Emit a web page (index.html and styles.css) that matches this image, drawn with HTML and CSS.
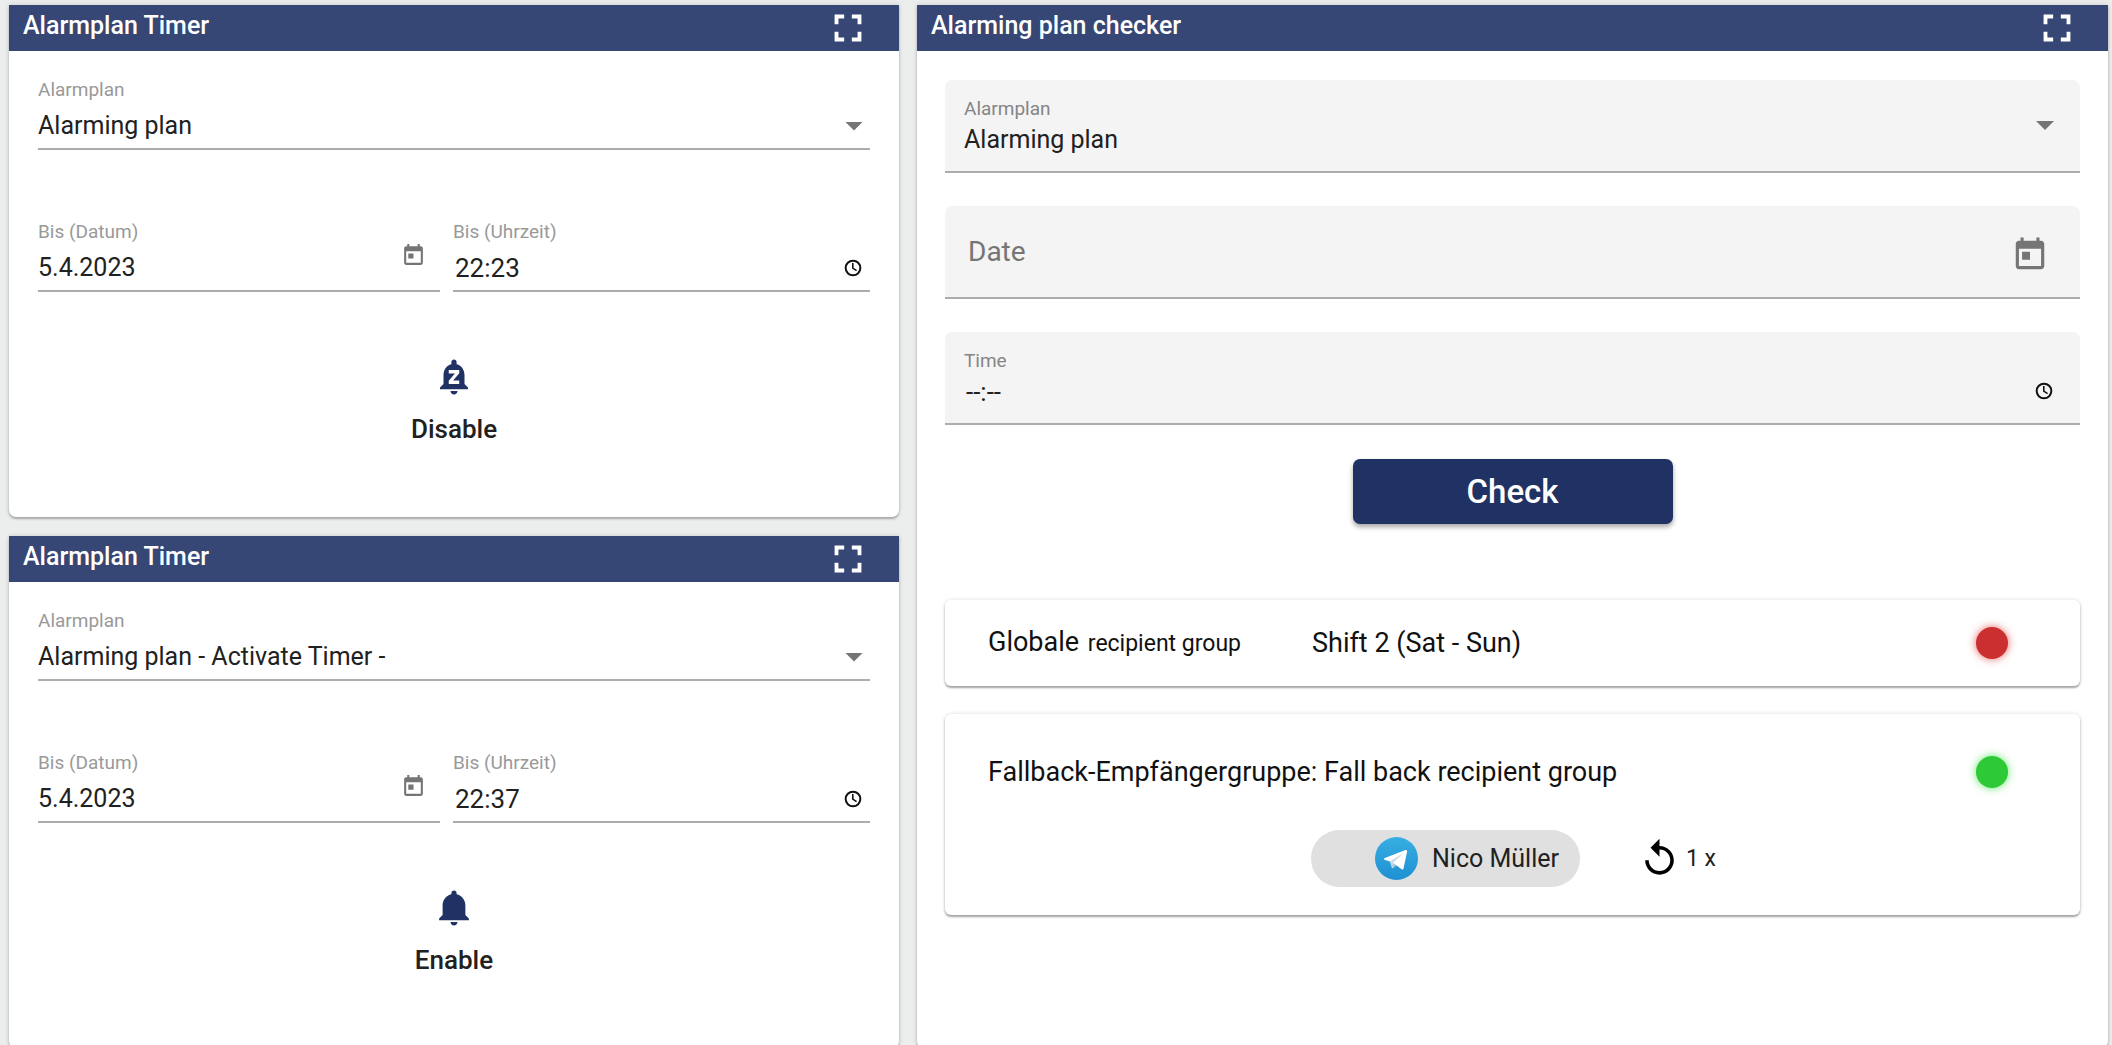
FILE: index.html
```html
<!DOCTYPE html>
<html lang="de">
<head>
<meta charset="utf-8">
<title>Alarmplan</title>
<meta name="viewport" content="width=device-width, initial-scale=1">
<link rel="stylesheet" href="styles.css">
</head>
<body>
<svg class="sprite" aria-hidden="true">
  <symbol id="i-fullscreen" viewBox="0 0 24 24"><path d="M7 14H5v5h5v-2H7v-3zm-2-4h2V7h3V5H5v5zm12 7h-3v2h5v-5h-2v3zM14 5v2h3v3h2V5h-5z"/></symbol>
  <symbol id="i-calendar" viewBox="0 0 24 24"><path d="M19 3h-1V1h-2v2H8V1H6v2H5c-1.100 0-2 .9-2 2v14c0 1.100.9 2 2 2h14c1.100 0 2-.9 2-2V5c0-1.100-.9-2-2-2zm0 16H5V8h14v11zM7 10h5v5H7z"/></symbol>
  <symbol id="i-clock" viewBox="0 0 24 24"><path d="M12 2a10 10 0 1 0 0 20 10 10 0 0 0 0-20zm0 17.600a7.600 7.600 0 1 1 0-15.200 7.600 7.600 0 0 1 0 15.200zM12.700 6h-1.900v6.600l5 3.300 1-1.500-4.100-2.600z"/></symbol>
  <symbol id="i-bell" viewBox="0 0 24 24"><path d="M12 22c1.100 0 2-.9 2-2h-4c0 1.100.9 2 2 2zm6.500-6v-5.500c0-3.070-2.130-5.640-5-6.320V3.500c0-.83-.67-1.500-1.500-1.500s-1.500.67-1.500 1.500v.68c-2.870.68-5 3.250-5 6.320V16L3.500 18v1h17v-1z"/></symbol>
  <symbol id="i-snooze" viewBox="0 0 24 24"><path fill-rule="evenodd" d="M12 22c1.100 0 2-.9 2-2h-4c0 1.100.9 2 2 2zm6-6v-5c0-3.070-1.630-5.640-4.500-6.320V3.500c0-.83-.67-1.500-1.500-1.500s-1.500.67-1.500 1.500v1.180C7.640 5.360 6 7.920 6 11v5l-2 2v1h16v-1l-2-2zM9 8h6v1.900L11.500 14H15v2H9v-1.900L12.500 10H9z"/></symbol>
  <symbol id="i-replay" viewBox="0 0 24 24"><path d="M12 5V1L7 6l5 5V7c3.310 0 6 2.690 6 6s-2.690 6-6 6-6-2.690-6-6H4c0 4.420 3.580 8 8 8s8-3.580 8-8-3.580-8-8-8z"/></symbol>
</svg>

<main class="dashboard">
  <div class="column">
    <section class="panel">
      <header class="panel-header">
        <h2>Alarmplan Timer</h2>
        <button class="icon-button" type="button" aria-label="Vollbild"><svg><use href="#i-fullscreen"/></svg></button>
      </header>
      <form class="timer">
        <div class="field">
          <label for="plan-1">Alarmplan</label>
          <div class="control">
            <select id="plan-1"><option>Alarming plan</option></select>
            <span class="arrow"></span>
          </div>
        </div>
        <div class="field-row">
          <div class="field">
            <label for="date-1">Bis (Datum)</label>
            <div class="control">
              <input id="date-1" type="text" value="5.4.2023">
              <button class="calendar" type="button" aria-label="Kalender"><svg><use href="#i-calendar"/></svg></button>
            </div>
          </div>
          <div class="field">
            <label for="time-1">Bis (Uhrzeit)</label>
            <div class="control">
              <input id="time-1" class="time" type="text" value="22:23">
              <svg class="clock"><use href="#i-clock"/></svg>
            </div>
          </div>
        </div>
        <button class="toggle" type="button"><svg><use href="#i-snooze"/></svg><span>Disable</span></button>
      </form>
    </section>

    <section class="panel grow">
      <header class="panel-header">
        <h2>Alarmplan Timer</h2>
        <button class="icon-button" type="button" aria-label="Vollbild"><svg><use href="#i-fullscreen"/></svg></button>
      </header>
      <form class="timer">
        <div class="field">
          <label for="plan-2">Alarmplan</label>
          <div class="control">
            <select id="plan-2"><option>Alarming plan - Activate Timer -</option></select>
            <span class="arrow"></span>
          </div>
        </div>
        <div class="field-row">
          <div class="field">
            <label for="date-2">Bis (Datum)</label>
            <div class="control">
              <input id="date-2" type="text" value="5.4.2023">
              <button class="calendar" type="button" aria-label="Kalender"><svg><use href="#i-calendar"/></svg></button>
            </div>
          </div>
          <div class="field">
            <label for="time-2">Bis (Uhrzeit)</label>
            <div class="control">
              <input id="time-2" class="time" type="text" value="22:37">
              <svg class="clock"><use href="#i-clock"/></svg>
            </div>
          </div>
        </div>
        <button class="toggle" type="button"><svg><use href="#i-bell"/></svg><span>Enable</span></button>
      </form>
    </section>
  </div>

  <section class="panel">
    <header class="panel-header">
      <h2>Alarming plan checker</h2>
      <button class="icon-button" type="button" aria-label="Vollbild"><svg><use href="#i-fullscreen"/></svg></button>
    </header>
    <div class="checker">
      <form class="checker-form">
        <div class="filled">
          <div class="filled-text">
            <label for="check-plan">Alarmplan</label>
            <select id="check-plan"><option>Alarming plan</option></select>
          </div>
          <span class="arrow"></span>
        </div>
        <div class="filled">
          <input id="check-date" class="date" type="text" placeholder="Date" aria-label="Date">
          <button class="calendar large" type="button" aria-label="Kalender"><svg><use href="#i-calendar"/></svg></button>
        </div>
        <div class="filled">
          <div class="filled-text">
            <label for="check-time">Time</label>
            <input id="check-time" class="time" type="text" value="--:--">
          </div>
          <svg class="clock low"><use href="#i-clock"/></svg>
        </div>
        <button class="check" type="button">Check</button>
      </form>

      <div class="results">
        <article class="card">
          <div class="card-row">
            <p class="group">Globale <small>recipient group</small></p>
            <p class="shift">Shift 2 (Sat - Sun)</p>
            <span class="status off"></span>
          </div>
        </article>
        <article class="card tall">
          <div class="card-row">
            <p class="group">Fallback-Empfängergruppe: Fall back recipient group</p>
            <span class="status on"></span>
          </div>
          <div class="recipient">
            <div class="chip">
              <svg class="telegram" viewBox="0 0 240 240">
                <defs><linearGradient id="tg" x1="0" y1="0" x2="0" y2="1"><stop offset="0" stop-color="#37aee2"/><stop offset="1" stop-color="#1e90d2"/></linearGradient></defs>
                <circle cx="120" cy="120" r="120" fill="url(#tg)"/>
                <path fill="#c8daea" d="M98 175c-3.900 0-3.200-1.500-4.600-5.200L82 132.200 170 80"/>
                <path fill="#a9c9dd" d="M98 175c3 0 4.300-1.400 6-3l16-15.600-20-12"/>
                <path fill="#fff" d="M100 144.400l48.400 35.700c5.500 3 9.500 1.500 10.900-5.100l19.700-92.800c2-8.100-3.100-11.800-8.400-9.400l-115.700 44.600c-7.900 3.200-7.800 7.600-1.400 9.500l29.700 9.300 68.700-43.400c3.200-2 6.200-.9 3.800 1.300"/>
              </svg>
              <span>Nico Müller</span>
            </div>
            <div class="repeat"><svg><use href="#i-replay"/></svg><span>1 x</span></div>
          </div>
        </article>
      </div>
    </div>
  </section>
</main>
</body>
</html>
```
FILE: styles.css
```css
* {
  box-sizing: border-box;
}

body {
  margin: 0;
  background: #eceeee;
  color: #212121;
  font-family: Roboto, "Liberation Sans", sans-serif;
  font-size: 25px;
  line-height: 30px;
}

h2,
p {
  margin: 0;
  font-weight: 400;
}

svg {
  display: block;
  fill: currentColor;
}

.sprite {
  display: none;
}

button,
input,
select {
  margin: 0;
  padding: 0;
  border: 0;
  background: none;
  color: inherit;
  font: inherit;
}

button {
  cursor: pointer;
}

input,
select {
  display: block;
  flex: 1;
  width: 100%;
  min-width: 0;
  height: 26px;
  line-height: 26px;
  outline: 0;
}

select {
  appearance: none;
  overflow: hidden;
}

/* Page grid */

.dashboard {
  display: grid;
  grid-template-columns: minmax(0, 890fr) minmax(0, 1191fr);
  gap: 18px;
  min-height: 100vh;
  padding: 5px 4px 0 9px;
}

.column {
  display: flex;
  flex-direction: column;
  gap: 19px;
}

.panel {
  border-radius: 0 0 7px 7px;
  background: #fff;
  box-shadow: 0 2px 2px rgba(0, 0, 0, 0.24), 0 0 5px rgba(0, 0, 0, 0.16);
}

.grow {
  flex: 1;
}

.panel-header {
  display: flex;
  align-items: flex-start;
  justify-content: space-between;
  height: 46px;
  padding: 0 28px 0 14px;
  background: #364675;
  color: #fff;
}

.panel-header h2 {
  padding-top: 6px;
  font-size: 25px;
  font-weight: 500;
}

.icon-button svg {
  width: 46px;
  height: 46px;
}

/* Timer panels */

.timer {
  display: flex;
  flex-direction: column;
  padding: 29px 29px 73px;
}

.field-row {
  display: grid;
  grid-template-columns: minmax(0, 402fr) minmax(0, 417fr);
  gap: 13px;
  margin-top: 72px;
}

label {
  display: block;
  color: #999;
  font-size: 19px;
  line-height: 20px;
}

.field .control {
  display: flex;
  align-items: center;
  margin-top: 13px;
  padding-bottom: 9px;
  border-bottom: 2px solid #acacac;
}

.arrow {
  width: 18px;
  height: 9px;
  margin-right: 7px;
  background: #757575;
  clip-path: polygon(0 0, 100% 0, 50% 100%);
}

.calendar {
  align-self: flex-start;
  height: 25px;
  margin: -12px 14px 0 0;
  color: #757575;
}

.calendar svg {
  width: 25px;
  height: 25px;
}

.clock {
  width: 20px;
  height: 20px;
  margin-right: 7px;
  color: #111;
}

.time {
  padding-left: 2px;
  font-size: 26px;
}

.toggle {
  display: flex;
  flex-direction: column;
  align-items: center;
  align-self: center;
  gap: 16px;
  margin-top: 64px;
  font-size: 26px;
  font-weight: 500;
}

.toggle svg {
  width: 42px;
  height: 42px;
  color: #203264;
}

/* Checker panel */

.checker {
  padding: 29px 28px;
}

.checker-form {
  display: flex;
  flex-direction: column;
  gap: 33px;
}

.filled {
  display: flex;
  align-items: center;
  height: 93px;
  padding: 0 19px;
  border-bottom: 2px solid #acacac;
  border-radius: 7px 7px 0 0;
  background: #f4f4f4;
}

.filled-text {
  flex: 1;
}

.filled label {
  margin-bottom: 8px;
  color: #858585;
}

.filled .low {
  align-self: flex-end;
  margin-bottom: 22px;
}

.date {
  height: 34px;
  padding-left: 4px;
  font-size: 28px;
  line-height: 34px;
}

.date::placeholder {
  color: #757575;
  opacity: 1;
}

.calendar.large {
  align-self: center;
  height: 38px;
  margin: 6px 12px 0 0;
}

.large svg {
  width: 38px;
  height: 38px;
}

.check {
  align-self: center;
  width: 320px;
  height: 65px;
  margin-top: 1px;
  border-radius: 7px;
  background: #203264;
  box-shadow: 0 3px 5px rgba(0, 0, 0, 0.35);
  color: #fff;
  font-size: 33px;
  font-weight: 500;
}

.results {
  display: flex;
  flex-direction: column;
  gap: 28px;
  margin-top: 76px;
}

.card {
  padding: 27px 72px 27px 43px;
  border-radius: 6px;
  box-shadow: 0 2px 2px rgba(0, 0, 0, 0.32), 0 0 4px rgba(0, 0, 0, 0.14);
}

.card.tall {
  padding: 42px 72px 28px 43px;
}

.card-row {
  display: flex;
  align-items: center;
  height: 32px;
  color: #111;
  font-size: 27px;
}

.group {
  min-width: 324px;
}

.group small {
  padding-left: 2px;
  font-size: 23px;
}

.status {
  width: 32px;
  height: 32px;
  margin-left: auto;
  border-radius: 50%;
}

.off {
  background: #cb3030;
  box-shadow: 0 0 9px rgba(225, 60, 60, 0.8);
}

.on {
  background: #2dc937;
  box-shadow: 0 0 9px rgba(60, 225, 70, 0.8);
}

.recipient {
  display: flex;
  align-items: center;
  gap: 58px;
  margin: 42px 0 0 323px;
}

.chip {
  display: flex;
  align-items: center;
  gap: 14px;
  height: 57px;
  padding: 0 21px 0 64px;
  border-radius: 29px;
  background: #e0e0e0;
}

.telegram {
  width: 43px;
  height: 43px;
}

.repeat {
  display: flex;
  align-items: center;
  gap: 5px;
  font-size: 23px;
}

.repeat svg {
  width: 43px;
  height: 43px;
  color: #000;
}
```
